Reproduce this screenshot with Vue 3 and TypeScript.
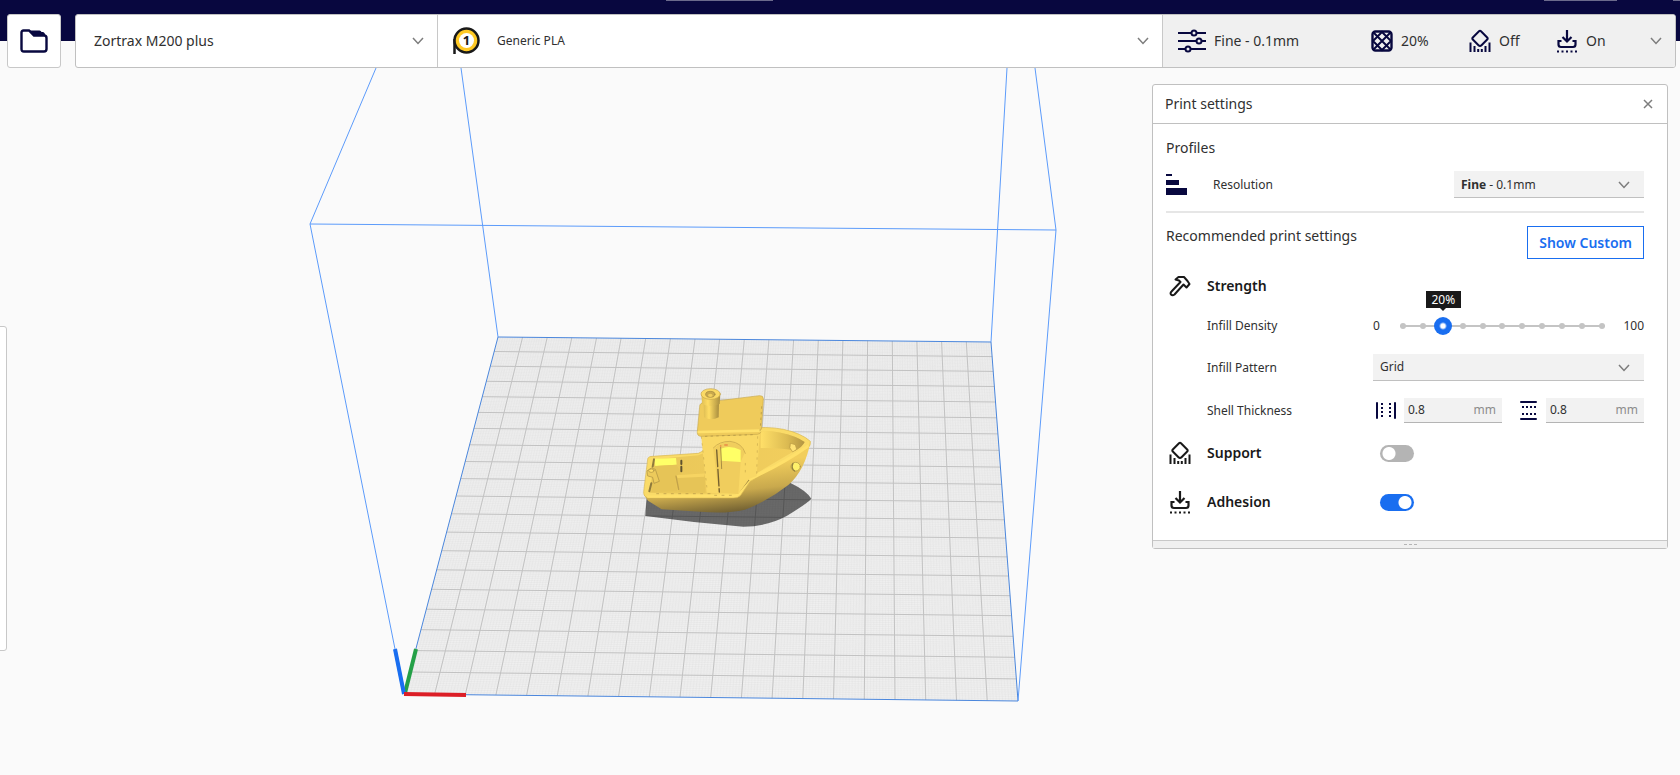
<script setup lang="ts">
import { computed, ref } from 'vue'

type Point = [number, number]

const density = ref(20)
const resolution = ref('fine')
const pattern = ref('Grid')
const wall = ref('0.8')
const topBottom = ref('0.8')
const support = ref(false)
const adhesion = ref(true)

const ticks = Array.from({ length: 11 }, (_, i) => i * 10)
const tipStyle = computed(() => ({ left: density.value + '%' }))

// Build plate corners on screen: back left, back right, front right, front left
const corners: Point[] = [
  [498, 337],
  [991, 342],
  [1018, 701],
  [404, 694],
]

// Projects unit-square plate coordinates on to the screen
function makeProjection([p0, p1, p2, p3]: Point[]) {
  const dx1 = p1[0] - p2[0]
  const dx2 = p3[0] - p2[0]
  const dx3 = p0[0] - p1[0] + p2[0] - p3[0]
  const dy1 = p1[1] - p2[1]
  const dy2 = p3[1] - p2[1]
  const dy3 = p0[1] - p1[1] + p2[1] - p3[1]
  const det = dx1 * dy2 - dx2 * dy1
  const g = (dx3 * dy2 - dx2 * dy3) / det
  const h = (dx1 * dy3 - dx3 * dy1) / det
  const a = p1[0] - p0[0] + g * p1[0]
  const b = p3[0] - p0[0] + h * p3[0]
  const d = p1[1] - p0[1] + g * p1[1]
  const e = p3[1] - p0[1] + h * p3[1]
  return (u: number, v: number): Point => {
    const w = g * u + h * v + 1
    return [(a * u + b * v + p0[0]) / w, (d * u + e * v + p0[1]) / w]
  }
}

const project = makeProjection(corners)

function gridPath(cells: number): string {
  const fmt = (p: Point) => p[0].toFixed(1) + ' ' + p[1].toFixed(1)
  let d = ''
  for (let i = 1; i < cells; i++) {
    const t = i / cells
    d += `M${fmt(project(t, 0))}L${fmt(project(t, 1))}`
    d += `M${fmt(project(0, t))}L${fmt(project(1, t))}`
  }
  return d
}

const plate = corners.map((p) => p.join(',')).join(' ')
const majorGrid = gridPath(20)
const minorGrid = gridPath(200)
</script>

<template>
  <div class="app">
    <svg class="scene" viewBox="0 0 1680 775" preserveAspectRatio="xMidYMid slice" aria-label="Build plate preview" role="img">
      <defs>
        <linearGradient id="hull" x1="0.35" y1="0" x2="0.6" y2="1">
          <stop offset="0.35" stop-color="#f2ce5c" />
          <stop offset="0.7" stop-color="#c9a94d" />
          <stop offset="1" stop-color="#6b5b30" />
        </linearGradient>
        <linearGradient id="deck" x1="0" y1="0" x2="1" y2="0">
          <stop offset="0" stop-color="#e9c759" />
          <stop offset="1" stop-color="#f2ce5d" />
        </linearGradient>
        <linearGradient id="bow" x1="0" y1="0" x2="1" y2="0">
          <stop offset="0" stop-color="#ffdf68" />
          <stop offset="0.6" stop-color="#dcbb52" />
          <stop offset="1" stop-color="#b39543" />
        </linearGradient>
        <linearGradient id="funnel" x1="0" y1="0" x2="1" y2="0">
          <stop offset="0" stop-color="#dfbe54" />
          <stop offset="0.35" stop-color="#ffdd64" />
          <stop offset="1" stop-color="#a88d3f" />
        </linearGradient>
      </defs>

      <polygon :points="plate" fill="#efefef" />
      <path :d="minorGrid" stroke="#d8d8d8" stroke-opacity="0.2" fill="none" />
      <path :d="majorGrid" stroke="#c2c2c2" fill="none" />
      <g class="volume">
        <polygon :points="plate" class="edge" />
        <path d="M404 694 310 224 376 68M310 224 1056 230M1056 230 1035 68M1018 701 1056 230M498 337 461 68M991 342 1007 68" />
      </g>

      <g transform="translate(620 370) scale(0.33333)" stroke-linejoin="round" stroke-linecap="round">
        <path d="M80 385 76 438Q220 458 370 470Q440 470 500 438Q562 400 574 386Q560 362 510 338L380 360Z" fill="#000" fill-opacity="0.56" />
        <path d="M72 375 84 392 125 418 240 425Q320 432 375 419Q445 392 505 345Q556 300 571 215L400 300Z" fill="url(#hull)" />
        <path d="M84 264 Q88 258 98 259L235 250 380 176Q440 168 490 178Q545 190 571 214Q574 228 560 236L390 335 362 376Q354 386 335 384L84 384Q70 380 71 366Z" fill="#fadb68" stroke="#d8b751" stroke-width="2" />
        <path d="M104 268 235 256 400 186Q440 180 482 188Q530 198 554 216Q548 228 532 238L384 325 352 368Q240 374 88 368Z" fill="url(#deck)" />
        <path d="M422 184Q450 180 482 188Q530 198 554 216Q548 230 526 242Q480 232 422 234Z" fill="url(#bow)" />
        <path d="M512 220l14 4 4 14-12 8-8-12z" fill="#ffe276" stroke="#b99a44" stroke-width="2" />
        <path d="M102 266 168 264 170 284 106 288Z" fill="#ffff68" />
        <path d="M106 288 170 284 184 310 165 318 172 364 96 366 98 300Z" fill="#e6c457" />
        <path d="M165 316 255 310 256 368 176 366Z" fill="#e6c457" />
        <path d="M165 316 255 310 253 320 174 324Z" fill="#f6d462" />
        <path d="M102 268 98 290M88 364 94 340" fill="none" stroke="#8f7a3d" stroke-width="6" />
        <path d="M184 272v10M184 290v14" fill="none" stroke="#5f522f" stroke-width="6" />
        <path d="M168 318l8 40" fill="none" stroke="#c2a24a" stroke-width="4" />
        <path d="M82 302 94 294 106 298 118 334 102 340 98 322 84 318Z" fill="#ecca5b" stroke="#a98e42" stroke-width="2" />
        <ellipse cx="94" cy="302" rx="8" ry="5" fill="#ffdf68" stroke="#a98e42" stroke-width="2" />
        <path d="M84 380 340 378Q354 378 362 366L390 324 450 294" fill="none" stroke="#ffe06a" stroke-width="7" />
        <path d="M352 370 388 328" fill="none" stroke="#9d8440" stroke-width="4" />
        <path d="M110 371h160M284 376h50" fill="none" stroke="#b49647" stroke-width="2" stroke-dasharray="6 16" />
        <path d="M390 326Q480 286 562 230" fill="none" stroke="#ffe06a" stroke-width="9" />
        <ellipse cx="527" cy="290" rx="14" ry="13" fill="#fff06a" stroke="#a98e42" stroke-width="2" />
        <path d="M519 280Q512 296 524 303" fill="none" stroke="#94803f" stroke-width="4" />
        <path d="M243 192 420 188 410 318 388 326 355 372 260 368Z" fill="#f9d865" />
        <path d="M280 238Q300 216 330 215Q366 218 374 250L362 275 355 372 296 368Z" fill="#f0cd5d" />
        <path d="M302 236Q330 224 362 240V276L302 272Z" fill="#ffff66" />
        <path d="M280 234Q298 214 330 214Q366 218 376 250" fill="none" stroke="#d2b150" stroke-width="3" />
        <path d="M290 240 298 366" stroke="#735f2f" stroke-width="4" stroke-dasharray="50 8" />
        <path d="M302 232 305 296" stroke="#a98e42" stroke-width="3" />
        <path d="M301 228h2M314 225h8" stroke="#e66a3a" stroke-width="3" />
        <path d="M244 200 262 366M376 280v26M413 200 410 312" fill="none" stroke="#c9a94d" stroke-width="2" stroke-dasharray="5 16" />
        <path d="M240 104Q242 100 248 98L418 77Q430 76 430 86L424 184Q422 192 412 193L242 199Q230 198 232 184Z" fill="#efcb5b" stroke="#c9a94c" stroke-width="2" />
        <path d="M236 186 422 182" stroke="#ffe16c" stroke-width="8" />
        <path d="M425 110 420 188M256 199 400 194" fill="none" stroke="#a98e42" stroke-width="2" stroke-dasharray="5 12" />
        <path d="M251 98H297L296 142Q274 154 252 142Z" fill="url(#funnel)" />
        <path d="M244 72H301L299 102Q272 114 246 102Z" fill="url(#funnel)" />
        <ellipse cx="272" cy="72" rx="29" ry="16" fill="#fbda65" stroke="#c5a54b" stroke-width="2" />
        <ellipse cx="271" cy="73" rx="14" ry="9" fill="#c8a84d" stroke="#a1873f" stroke-width="2" />
        <ellipse cx="271" cy="76" rx="7" ry="5" fill="#f1cf5e" />
      </g>

      <g fill="none" stroke-width="4">
        <path d="M405 693 416 649" stroke="#24a047" />
        <path d="M404 694 395 649" stroke="#196ef0" />
        <path d="M404 694 466 695" stroke="#dc1e26" />
      </g>
    </svg>

    <header class="stripe" aria-hidden="true">
      <i class="sliver sliver-stage"></i>
      <i class="sliver sliver-market"></i>
      <i class="sliver sliver-account"></i>
    </header>

    <nav class="bar" aria-label="Print setup">
      <button class="open" type="button" aria-label="Open file">
        <svg width="28" height="24" viewBox="0 0 28 24">
          <path d="M3.5 1.500H9L14 6.500H24Q26.500 6.500 26.500 9V20Q26.500 22.500 24 22.500H4Q1.500 22.500 1.500 20V3.500Q1.500 1.500 3.500 1.500Z" fill="none" stroke="currentColor" stroke-width="2.400" />
          <path d="M9 1.500H19.500Q21 1.500 21.500 3H23Q25 3.500 25.500 7H14Z" fill="currentColor" />
        </svg>
      </button>
      <div class="setup">
        <button class="cell machine" type="button">
          <span>Zortrax M200 plus</span>
          <svg class="chevron" width="12" height="8" viewBox="0 0 12 8"><path d="M1 1 6 6.500 11 1" /></svg>
        </button>
        <button class="cell material" type="button">
          <svg width="28" height="30" viewBox="0 0 28 30">
            <path d="M2.500 13V28" stroke="#191919" stroke-width="2.500" />
            <circle cx="14.500" cy="14.500" r="12" fill="#ffc924" stroke="#191919" stroke-width="2.500" />
            <circle cx="14.500" cy="14.500" r="7.500" fill="#fff" />
            <text class="extruder" x="14.500" y="19" text-anchor="middle">1</text>
          </svg>
          <span class="small">Generic PLA</span>
          <svg class="chevron" width="12" height="8" viewBox="0 0 12 8"><path d="M1 1 6 6.500 11 1" /></svg>
        </button>
        <button class="cell summary" type="button">
          <svg class="sliders" width="28" height="24" viewBox="0 0 28 24" fill="none" stroke="currentColor" stroke-width="2">
            <path d="M0 4H13M19 4H28M0 12H18M24 12H28M0 20H7M13 20H28" />
            <circle cx="16" cy="4" r="2.500" /><circle cx="21" cy="12" r="2.500" /><circle cx="10" cy="20" r="2.500" />
          </svg>
          <span class="profile">Fine - 0.1mm</span>
          <span class="stat infill">
            <svg width="22" height="22" viewBox="0 0 22 22" fill="none" stroke="currentColor">
              <rect x="1.500" y="1.500" width="19" height="19" rx="3" stroke-width="2.400" />
              <path d="M2 2 20 20M20 2 2 20M11 2 20 11 11 20 2 11Z" stroke-width="2" />
            </svg>
            {{ density }}%
          </span>
          <span class="stat supports">
            <svg width="22" height="24" viewBox="0 0 22 24"><use href="#icon-support" /></svg>
            {{ support ? 'On' : 'Off' }}
          </span>
          <span class="stat">
            <svg width="22" height="24" viewBox="0 0 22 24"><use href="#icon-adhesion" /></svg>
            {{ adhesion ? 'On' : 'Off' }}
          </span>
          <svg class="chevron" width="12" height="8" viewBox="0 0 12 8"><path d="M1 1 6 6.500 11 1" /></svg>
        </button>
      </div>
    </nav>

    <aside class="tools" aria-hidden="true"></aside>

    <section class="panel" aria-labelledby="panel-title">
      <div class="panel-head">
        <h1 id="panel-title">Print settings</h1>
        <button class="close" type="button" aria-label="Close">
          <svg width="10" height="10" viewBox="0 0 10 10"><path d="M1 1 9 9M9 1 1 9" stroke="currentColor" stroke-width="1.500" /></svg>
        </button>
      </div>

      <div class="panel-body">
        <h2>Profiles</h2>
        <div class="row resolution">
          <svg width="21" height="22" viewBox="0 0 21 22" fill="#08083f"><path d="M0 0H6V2H0ZM0 6H13V11H0ZM0 14H21V21H0Z" /></svg>
          <label for="resolution">Resolution</label>
          <div class="dropdown">
            <select id="resolution" v-model="resolution" class="ghost">
              <option value="fine">Fine - 0.1mm</option>
              <option value="normal">Normal - 0.15mm</option>
            </select>
            <span class="shown" aria-hidden="true">
              <template v-if="resolution === 'fine'"><b>Fine</b> - 0.1mm</template>
              <template v-else><b>Normal</b> - 0.15mm</template>
            </span>
            <svg class="chevron" width="12" height="8" viewBox="0 0 12 8"><path d="M1 1 6 6.500 11 1" /></svg>
          </div>
        </div>
        <hr />
        <div class="recommended">
          <h2>Recommended print settings</h2>
          <button class="custom" type="button">Show Custom</button>
        </div>

        <div class="row section strength">
          <svg width="22" height="22" viewBox="0 0 22 22" fill="none" stroke="currentColor" stroke-width="2" stroke-linejoin="round">
            <path d="M6.500 4.500 9.500 2H15L18.500 6 20.500 9 17.500 12.500 14.500 9.500 5.500 19.500Q3.500 21 2 19.500Q1 18 2.500 16.500L11.500 7 10 5.500Z" />
          </svg>
          <h3>Strength</h3>
        </div>

        <div class="row density">
          <label for="density">Infill Density</label>
          <div class="scale">
            <span>0</span>
            <div class="slider">
              <div class="track" aria-hidden="true"><i v-for="t in ticks" :key="t"></i></div>
              <input id="density" v-model.number="density" type="range" min="0" max="100" step="10" />
              <div class="tips"><output class="tip" for="density" :style="tipStyle">{{ density }}%</output></div>
            </div>
            <span class="max">100</span>
          </div>
        </div>

        <div class="row pattern">
          <label for="pattern">Infill Pattern</label>
          <div class="dropdown">
            <select id="pattern" v-model="pattern">
              <option>Grid</option>
              <option>Lines</option>
              <option>Cubic</option>
            </select>
            <svg class="chevron" width="12" height="8" viewBox="0 0 12 8"><path d="M1 1 6 6.500 11 1" /></svg>
          </div>
        </div>

        <div class="row shell">
          <label for="wall">Shell Thickness</label>
          <div class="shells">
            <svg width="20" height="20" viewBox="0 0 20 20" fill="none" stroke="#08083f" stroke-width="2">
              <path d="M1 2V17M19 2V17" stroke-linecap="round" /><path d="M6 2V17M14 2V17" stroke-dasharray="2 2" />
            </svg>
            <div class="measure"><input id="wall" v-model="wall" type="text" /><span>mm</span></div>
            <svg class="horizontal" width="20" height="20" viewBox="0 0 20 20" fill="none" stroke="#08083f" stroke-width="2">
              <path d="M3 1H18M3 18H18" stroke-linecap="round" /><path d="M4 6H18M4 13H18" stroke-dasharray="2 2" />
            </svg>
            <div class="measure"><input v-model="topBottom" type="text" aria-label="Top and bottom thickness" /><span>mm</span></div>
          </div>
        </div>

        <div class="row section support">
          <svg width="22" height="24" viewBox="0 0 22 24">
            <g id="icon-support" fill="none" stroke="currentColor" stroke-width="2">
              <path d="M10 2.200Q11 1.200 12 2.200L18.200 8.500Q19.200 9.500 18.200 10.500L12.500 16.200Q11 17.700 9.500 16.200L3.800 10.500Q2.800 9.500 3.800 8.500Z" />
              <path d="M1.500 13.500V23M5.500 17V23M16.500 17V23M20.500 13.500V23M9.200 20V23M12.800 20V23" />
            </g>
          </svg>
          <label for="support">Support</label>
          <input id="support" v-model="support" class="switch" type="checkbox" role="switch" />
        </div>

        <div class="row section adhesion">
          <svg width="22" height="24" viewBox="0 0 22 24">
            <g id="icon-adhesion" fill="none" stroke="currentColor" stroke-width="2.200">
              <path d="M11 1V12M6.500 8 11 12.500 15.500 8" />
              <path d="M5.500 12H2.500V15.500Q2.500 18 5 18H17Q19.500 18 19.500 15.500V12H16.500" />
              <path d="M1 22.500H21" stroke-width="2" stroke-dasharray="2 2.500" />
            </g>
          </svg>
          <label for="adhesion">Adhesion</label>
          <input id="adhesion" v-model="adhesion" class="switch" type="checkbox" role="switch" />
        </div>
      </div>

      <div class="grip" aria-hidden="true"><i></i><i></i><i></i></div>
    </section>
  </div>
</template>

<style>
body {
  margin: 0;
  background: #fafafa;
}
</style>

<style scoped>
.app {
  position: relative;
  display: flex;
  flex-direction: column;
  min-height: 100vh;
  overflow: hidden;
  font: 12px/20px 'Noto Sans', sans-serif;
  color: #303030;
}

.app * {
  box-sizing: border-box;
}

button,
input,
select {
  margin: 0;
  font: inherit;
  color: inherit;
}

svg {
  display: block;
  flex: none;
}

h1,
h2,
h3 {
  margin: 0;
  font-size: 14px;
  font-weight: 400;
}

.scene {
  position: absolute;
  inset: 0;
  width: 100%;
  height: 100%;
}

.volume {
  fill: none;
  stroke: #5c9bfa;
}

.edge {
  stroke: #4a86dc;
}

.stripe {
  position: relative;
  height: 41px;
  background: #08073f;
}

.sliver {
  position: absolute;
  top: 0;
  height: 1px;
  background: #6b6a8c;
}

.sliver-stage {
  right: 907px;
  width: 107px;
}

.sliver-market {
  right: 63px;
  width: 73px;
}

.sliver-account {
  right: 0;
  width: 7px;
}

.bar {
  position: relative;
  display: flex;
  gap: 14px;
  margin: -27px 4px 0 7px;
}

.open {
  display: grid;
  place-items: center;
  width: 54px;
  height: 54px;
  padding: 0;
  border: 1px solid #c8c8c8;
  border-radius: 3px;
  background: #fff;
  color: #08083f;
}

.setup {
  display: grid;
  grid-template-columns: 361fr 725fr 513fr;
  flex: 1;
  height: 54px;
  border: 1px solid #c0c0c0;
  border-radius: 3px;
  overflow: hidden;
  background: #fff;
}

.cell {
  display: flex;
  align-items: center;
  min-width: 0;
  padding: 0 13px 0 18px;
  border: 0;
  border-left: 1px solid #c8c8c8;
  background: transparent;
  font-size: 14px;
  text-align: left;
  white-space: nowrap;
}

.machine {
  border-left: 0;
}

.material {
  gap: 17px;
  padding-left: 14px;
}

.small {
  font-size: 12px;
}

.extruder {
  font-size: 13px;
  font-weight: 700;
  fill: #191919;
}

.summary {
  background: #f0f0f0;
  gap: 8px;
  padding-left: 15px;
}

.sliders,
.stat svg {
  color: #08083f;
}

.profile {
  flex: 1;
}

.stat {
  display: flex;
  align-items: center;
  gap: 8px;
  width: 86px;
}

.infill {
  width: 90px;
}

.supports {
  width: 79px;
}

.chevron {
  margin-left: auto;
  fill: none;
  stroke: #7d7d7d;
  stroke-width: 1.5;
}

.summary .chevron {
  margin-left: 0;
}

.tools {
  position: absolute;
  left: -4px;
  top: 326px;
  width: 11px;
  height: 325px;
  border: 1px solid #c8c8c8;
  border-radius: 3px;
  background: #fff;
}

.panel {
  position: relative;
  align-self: flex-end;
  width: 516px;
  margin: 16px 12px 20px;
  border: 1px solid #c0c0c0;
  border-radius: 3px;
  background: #fff;
}

.panel-head {
  display: flex;
  align-items: center;
  justify-content: space-between;
  height: 39px;
  padding: 0 14px 0 12px;
  border-bottom: 1px solid #c0c0c0;
}

.close {
  padding: 0;
  border: 0;
  background: none;
  color: #7d7d7d;
}

.panel-body {
  padding: 14px 23px 26px 13px;
}

.row {
  display: grid;
  grid-template-columns: 41px 166px 1fr;
  align-items: center;
}

.row > label,
.row > h3 {
  grid-column: 2;
}

.row.resolution {
  grid-template-columns: 47px 1fr 190px;
  margin-top: 13px;
}

hr {
  height: 2px;
  margin: 13px 0;
  border: 0;
  background: #e6e6e6;
}

.recommended {
  display: flex;
  align-items: flex-start;
  justify-content: space-between;
}

.custom {
  height: 33px;
  padding: 0 11px;
  border: 1px solid #196ef0;
  background: #fff;
  color: #196ef0;
  font-size: 14px;
  font-weight: 600;
}

.section {
  padding-left: 3px;
  grid-template-columns: 38px 173px 1fr;
  color: #191919;
}

.section > label,
.section > h3 {
  font-size: 14px;
  font-weight: 600;
}

.strength {
  height: 20px;
  margin-top: 16px;
}

.density {
  height: 27px;
  margin-top: 17px;
}

.scale {
  display: flex;
  align-items: center;
  justify-content: space-between;
}

.scale > span {
  width: 21px;
}

.scale > .max {
  width: 33px;
  text-align: right;
}

.slider {
  position: relative;
  flex: 1;
}

.slider input {
  position: relative;
  display: block;
  width: 100%;
  height: 18px;
  appearance: none;
  background: transparent;
}

.slider input::-webkit-slider-thumb {
  appearance: none;
  width: 18px;
  height: 18px;
  border-radius: 50%;
  background: radial-gradient(circle, #fff 0 2px, #196ef0 4px);
}

.track {
  position: absolute;
  inset: 0 6px;
  display: flex;
  align-items: center;
  justify-content: space-between;
  background: linear-gradient(#c4c4c4, #c4c4c4) center / 100% 2px no-repeat;
}

.track i {
  width: 6px;
  height: 6px;
  border-radius: 50%;
  background: #c4c4c4;
}

.tips {
  position: absolute;
  inset: 0 9px;
  pointer-events: none;
}

.tip {
  position: absolute;
  bottom: 27px;
  width: 35px;
  margin-left: -17px;
  background: #191919;
  color: #fff;
  line-height: 17px;
  text-align: center;
}

.tip::after {
  content: '';
  position: absolute;
  top: 100%;
  left: 50%;
  margin-left: -3px;
  border: 3px solid transparent;
  border-top-color: #191919;
}

.pattern {
  margin-top: 15px;
}

.dropdown {
  position: relative;
  height: 27px;
}

.dropdown select {
  display: block;
  width: 100%;
  height: 100%;
  padding: 0 30px 0 7px;
  appearance: none;
  border: 0;
  border-bottom: 1px solid #c0c0c0;
  border-radius: 0;
  background: #f2f2f2;
}

.dropdown .ghost {
  color: transparent;
}

.ghost option {
  color: #303030;
}

.shown {
  position: absolute;
  left: 7px;
  top: 4px;
  line-height: 20px;
  pointer-events: none;
}

.dropdown .chevron {
  position: absolute;
  right: 14px;
  top: 10px;
  pointer-events: none;
}

.shell {
  margin-top: 17px;
}

.shells {
  display: grid;
  grid-template-columns: 20px minmax(0, 1fr) 28px minmax(0, 1fr);
  align-items: center;
  column-gap: 8px;
  padding-left: 3px;
}

.horizontal {
  justify-self: end;
}

.measure {
  display: flex;
  align-items: center;
  height: 25px;
  padding: 0 6px 0 4px;
  border-bottom: 1px solid #b4b4b4;
  background: #f2f2f2;
  color: #8c8c8c;
}

.measure input {
  flex: 1;
  min-width: 0;
  padding: 0;
  border: 0;
  background: transparent;
  color: #303030;
}

.support {
  height: 24px;
  margin-top: 18px;
}

.adhesion {
  height: 24px;
  margin-top: 25px;
}

.switch {
  width: 34px;
  height: 17px;
  appearance: none;
  border-radius: 9px;
  background: radial-gradient(circle at 9px 50%, #fff 6px, #b4b4b4 7px);
}

.switch:checked {
  background: radial-gradient(circle at 25px 50%, #fff 6px, #196ef0 7px);
}

.grip {
  display: flex;
  align-items: center;
  justify-content: center;
  gap: 2px;
  height: 8px;
  border-top: 1px solid #c8c8c8;
  background: #f0f0f0;
}

.grip i {
  width: 3px;
  height: 1px;
  background: #b4b4b4;
}
</style>
